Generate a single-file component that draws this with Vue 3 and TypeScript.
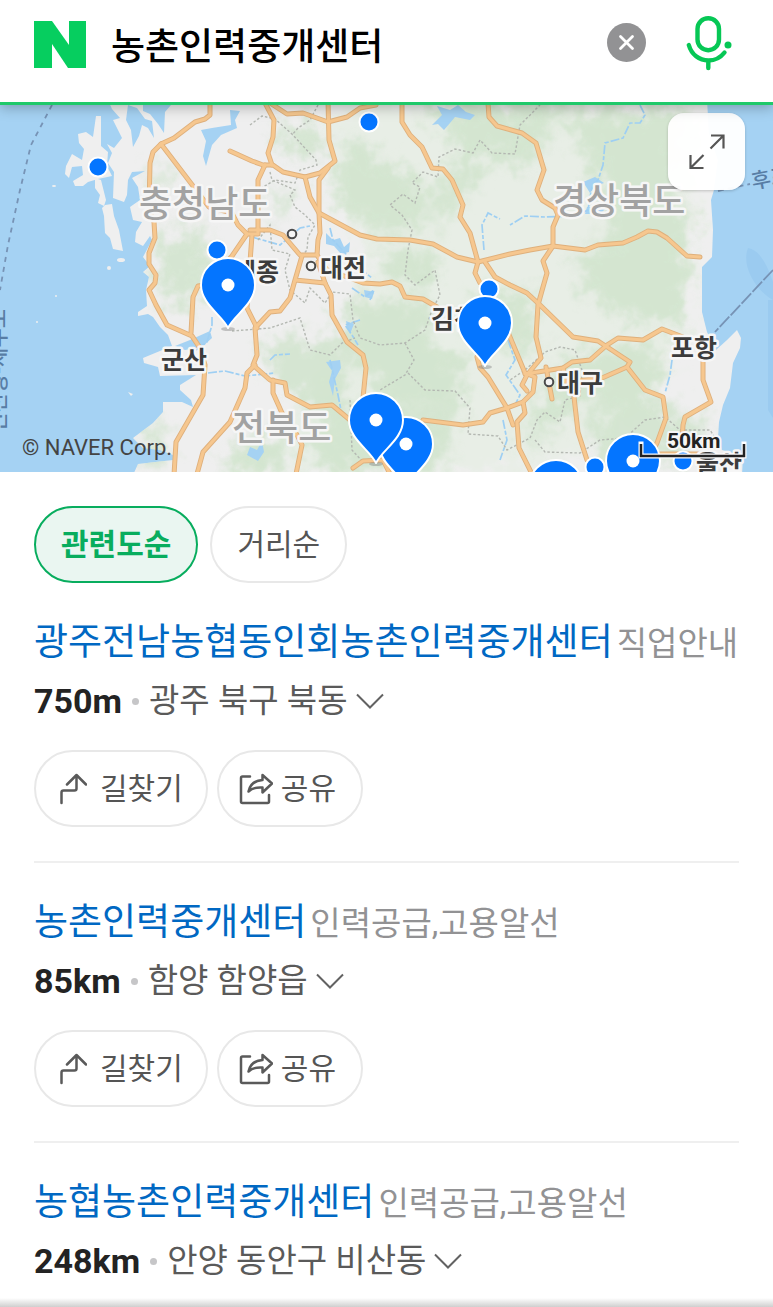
<script setup lang="ts">
import { ref } from 'vue'

interface Place {
  name: string
  category: string
  distance: string
  address: string
  actions: boolean
}

interface Label {
  text: string
  x: number
  y: number
}

interface Point {
  x: number
  y: number
}

const query = ref('농촌인력중개센터')
const sort = ref('관련도순')
const sorts: string[] = ['관련도순', '거리순']

const places: Place[] = [
  { name: '광주전남농협동인회농촌인력중개센터', category: '직업안내', distance: '750m', address: '광주 북구 북동', actions: true },
  { name: '농촌인력중개센터', category: '인력공급,고용알선', distance: '85km', address: '함양 함양읍', actions: true },
  { name: '농협농촌인력중개센터', category: '인력공급,고용알선', distance: '248km', address: '안양 동안구 비산동', actions: false },
]

const provinces: Label[] = [
  { text: '충청남도', x: 139, y: 217 },
  { text: '경상북도', x: 553, y: 214 },
  { text: '전북도', x: 232, y: 441 },
]

const cities: Label[] = [
  { text: '세종', x: 233, y: 281 },
  { text: '대전', x: 320, y: 277 },
  { text: '군산', x: 161, y: 369 },
  { text: '김천', x: 431, y: 328 },
  { text: '포항', x: 671, y: 357 },
  { text: '대구', x: 557, y: 392 },
  { text: '울산', x: 696, y: 473 },
]

const cityDots: Point[] = [
  { x: 292, y: 234 },
  { x: 311, y: 266 },
  { x: 549, y: 382 },
]

const dots: Point[] = [
  { x: 98, y: 167 },
  { x: 369, y: 122 },
  { x: 217, y: 250 },
  { x: 489, y: 289 },
  { x: 595, y: 467 },
  { x: 683, y: 461 },
]

const pins: Point[] = [
  { x: 228, y: 285 },
  { x: 485, y: 323 },
  { x: 406, y: 444 },
  { x: 376, y: 420 },
  { x: 556, y: 487 },
  { x: 633, y: 461 },
]

const roads: string[] = [
  'M210 100V115L205 119L195 122L174 138L161 144L153 152L150 163L149 210L154 222L155 238L149 253V264L156 275L155 283L149 290L156 305L167 325L192 336L200 348L205 365L203 395L176 442L174 475',
  'M161 144L190 182L209 207L232 213L238 225L247 234H258V180L265 165',
  'M230 151L252 161L263 165H273L283 172L305 177L320 173L335 161L329 140L328 100',
  'M247 234L232 256L205 285L198 286L193 297L191 333',
  'M252 235L250 262L247 308L257 328',
  'M265 103L274 120L273 137L268 153L272 165',
  'M270 103L287 114L303 113L328 122L347 117L360 108L376 105',
  'M328 168L319 180V213L320 233L318 240L317 255',
  'M305 177L310 197L319 213L360 235L377 239L410 240L433 244L457 257L478 262L510 254L530 250L553 246L585 250L598 245L623 243L637 237L648 231L657 232L667 238L687 256L700 257',
  'M402 103V122L410 135L422 147L432 168L443 169L452 180L463 205L460 217L470 233L478 262L475 273L480 283',
  'M488 103L489 117L497 126L522 133L536 143L544 170L537 190L542 200L555 208L558 215L553 227V246L543 261L547 273L543 287L538 305L536 337L541 358L527 375',
  'M485 262L495 277L510 285L527 293L540 305L573 337L598 341L630 362L627 367L645 390L663 397L666 418L657 443L640 474',
  'M525 374L563 368L572 362L590 360L607 345L618 338L643 340L662 329L683 337',
  'M627 367L602 378L566 382L563 368M546 367L552 399',
  'M703 360V380L711 402L685 417L683 425L682 442M660 454H700',
  'M505 325L525 373L535 377L533 392L523 402L507 408L490 413L483 422L463 425L423 420',
  'M523 402L525 413L517 422L519 448L532 474',
  'M574 397L578 432L587 460',
  'M477 357L480 368L488 377L507 408L513 425',
  'M325 283L331 295L332 315L347 342L363 355L366 368L363 398',
  'M250 230H270L283 235L300 255H317L327 270L347 277L363 283L380 284L392 282L400 286L405 297L423 299L437 307',
  'M302 256L295 280L325 283L318 262M295 280L290 298L280 311L270 312L255 328L257 355L253 365L270 380L285 383L287 395L310 407L332 405L350 420',
  'M273 380V393L282 413L297 435L302 445L296 474',
  'M255 365L247 373L245 388L230 422L203 452L197 474',
  'M353 468L363 461L383 460L390 474',
  'M527 375L522 385L527 391',
]

const borders: string[] = [
  'M250 125L262 116L275 119L292 134L316 160L317 165L300 170L295 183L275 180L258 190',
  'M318 105L310 120L298 128L292 135M270 172L272 180L295 190L290 195L295 207L305 215L315 225L308 237L307 250L300 258',
  'M258 240L270 225L272 250L290 254L285 270L290 290L305 303L310 288L325 303L332 292L350 294L353 320L360 338L380 345L405 343L425 330L432 310L440 295L435 270L415 285L405 275L408 250L412 230L402 215L390 205L403 194L415 203L420 187L412 183L423 172L438 177L439 157L455 149L473 153L480 140L492 153L515 154L520 125L540 105',
  'M232 331L270 328L300 318L310 350L330 355L342 343L355 338',
  'M405 343L414 360L405 375L380 390M408 373L425 390L455 391L470 408L468 434L498 436L507 450L530 438L537 420L545 412L560 422L565 400L580 396L582 370L575 350L560 347L545 352L525 370L510 380',
  'M535 440L545 452L580 453L600 440L625 438L645 420L665 417L680 430L710 430L720 445',
  'M350 400L352 450L362 461',
]

const rivers: string[] = [
  'M640 105L645 115L640 123L630 123L623 138L605 143L603 165L598 180L592 186L588 210L575 216L545 217L525 216L510 225',
  'M270 360L275 355L290 354M212 317V325L207 342L196 350M208 373L225 371L245 376L275 373',
  'M352 288L365 297L374 290L370 300M360 320L345 325L352 335L358 345',
  'M330 360L338 395L342 415M672 360L670 375L665 393M484 250L482 225L488 213L500 219',
  'M252 237L280 245L300 228L310 226M330 228L333 240L345 253L352 262L372 278',
  'M508 340L515 360L506 375L520 395L515 405M503 420L507 440L500 460',
]

const woods: string[] = [
  'M420 105H565L550 140L520 170L490 155L460 200L440 230L430 210L460 150Z',
  'M385 160L430 185L420 235L380 230L345 215L330 170L355 140Z',
  'M565 115L690 110L685 150L670 200L620 200L590 170Z',
  'M600 180L690 210L685 330L640 320L590 300L575 260L610 240Z',
  'M345 300L430 300L430 345L470 360L460 410L390 405L340 350Z',
  'M260 340L340 340L350 410L340 470L310 470L320 420L270 370Z',
  'M275 125L320 125L325 150L290 160Z',
  'M155 165L170 170L165 190L150 185Z',
  'M165 235L205 230L215 285L180 310L155 285Z',
  'M370 255L440 250L430 295L390 280Z',
  'M570 350L660 345L655 400L630 420L590 400L560 420L530 455L530 410Z',
  'M590 420L650 400L710 425L680 460L600 470Z',
  'M350 410H460L440 472H330Z',
  'M275 190L290 195L285 220L272 215Z',
  'M140 430L165 425L165 465L145 470Z',
  'M230 445L280 430L290 472H225Z',
  'M470 300L530 290L540 350L500 350Z',
]
</script>

<template>
  <div class="page">
    <header class="header">
      <a class="logo" href="#" aria-label="네이버 홈">
        <svg viewBox="0 0 52 47" width="52" height="47" aria-hidden="true">
          <rect width="52" height="47" fill="#06ce5f" />
          <polygon points="18,0 35,0 35,24" fill="#fff" />
          <polygon points="18,23 18,47 34,47" fill="#fff" />
        </svg>
      </a>
      <form class="search" role="search" @submit.prevent>
        <input v-model="query" class="query" type="text" aria-label="검색어" />
        <button class="icon-button" type="button" aria-label="지우기" @click="query = ''">
          <svg viewBox="0 0 39 39" width="39" height="39" aria-hidden="true">
            <circle cx="19.5" cy="19.5" r="19.5" fill="#929294" />
            <path d="M13.5 13.5L25.5 25.5M25.5 13.5L13.5 25.5" stroke="#fff" stroke-width="2.8" stroke-linecap="round" />
          </svg>
        </button>
        <button class="icon-button mic" type="button" aria-label="음성 검색">
          <svg viewBox="0 0 46 56" width="46" height="56" fill="none" stroke="#06c755" stroke-width="4.4" stroke-linecap="round" aria-hidden="true">
            <rect x="11.5" y="3.2" width="21.5" height="32" rx="10.7" />
            <path d="M2.8 30C5.500 39.5 13 45.5 22.5 45.5C29.5 45.5 35 42 38.5 37.5M22.3 46V53" />
            <circle cx="42" cy="30" r="3.5" fill="#06c755" stroke="none" />
          </svg>
        </button>
      </form>
    </header>

    <section class="map" aria-label="지도">
      <svg class="map-canvas" viewBox="0 105 773 367" preserveAspectRatio="xMidYMid slice">
        <defs>
          <filter id="soft" x="-10%" y="-10%" width="120%" height="120%">
            <feGaussianBlur in="SourceGraphic" stdDeviation="7" result="b" />
            <feTurbulence type="fractalNoise" baseFrequency="0.06" numOctaves="3" seed="4" result="n" />
            <feDisplacementMap in="b" in2="n" scale="42" xChannelSelector="R" yChannelSelector="G" />
          </filter>
          <clipPath id="land">
            <path d="M108 100L112 109L120 118L113 120L118 130L122 138L114 148L107 144L112 153L108 163L114 172L113 198L124 202L127 195L128 180L132 172L145 171L132 178L138 187L140 200L130 207L133 220L142 222L136 232L135 242L143 246L150 236L152 240L143 257L150 266L143 272L149 277L146 290L147 306L138 312V316L148 314L153 317L160 327L168 335L172 346L143 358L144 363L158 367L160 376L196 375L180 385V390L191 400L193 407L182 402H163V412L153 423L133 438L143 448L160 450L173 455V460L138 464L133 475H742L743 456L722 450L718 438L719 422L723 405L730 388L733 363L740 348L741 338L737 330L727 340L716 350L707 332L702 312V267L712 257L713 230L711 200L714 190L718 160L709 133L707 100Z" />
          </clipPath>
        </defs>

        <rect x="0" y="100" width="773" height="375" fill="#a5d2f3" />
        <path d="M748 248C760 250 767 265 773 282V300C755 290 741 265 748 248ZM768 300V410L773 418V300Z" fill="#9bcbf0" />

        <g clip-path="url(#land)">
          <rect x="0" y="100" width="773" height="375" fill="#efefef" />
          <path d="M330 105H700L690 330L640 420L540 472H230L340 360L370 260L330 200Z" fill="#e8eee6" filter="url(#soft)" />
          <g fill="#cfe3cb" opacity="0.8" filter="url(#soft)">
            <path v-for="d in woods" :key="d" :d="d" />
          </g>
        </g>

        <g fill="#efefef">
          <path d="M96 116H101V146L108 152L107 166L112 176L98 179L88 182L83 186H75L73 181L83 175L82 166L72 167L69 178L65 174L66 166L72 154L82 160L84 149L79 143L78 134L86 132L93 137Z" />
          <path d="M95 178L101 180L106 200L104 206L98 203L100 195L95 188Z" />
          <path d="M105 205L112 204L114 216L119 230L123 251L113 249L110 238L105 233L104 216L102 208Z" />
          <ellipse cx="54" cy="186" rx="2" ry="1" />
          <ellipse cx="121" cy="260" rx="4" ry="2" />
          <circle cx="109" cy="268" r="2" />
          <circle cx="56" cy="296" r="1" />
          <circle cx="37" cy="322" r="1" />
          <path d="M128 392L133 394L131 396Z" />
        </g>

        <g fill="#a5d2f3">
          <path d="M128 105L137 108L145 119L152 121L154 138L148 128L142 125L139 136L133 147L131 130L126 120Z" />
          <path d="M143 105H171L165 112L164 133L158 124L150 114L143 111Z" />
          <path d="M230 110L240 111L235 120L237 128L221 135L212 145L206 166L203 156L206 141L201 130L212 128L231 125Z" />
          <path d="M175 346L190 340L210 331L212 338L202 347L185 350Z" />
          <path d="M432 125L442 115L437 106L450 110L458 105L466 112L475 115L470 120L455 117L450 123L444 130L438 124Z" />
          <path d="M583 182L595 177L604 183L595 186L590 193L585 185ZM587 207H607L600 214L585 214Z" />
          <path d="M326 233L333 240L340 238L344 247L350 242L349 252L341 254L334 246L326 244Z" />
          <path d="M326 362L340 360L341 368L335 379L333 396L329 382L332 371Z" />
          <path d="M250 447L257 450L262 441L264 452L258 461L247 455Z" />
          <path d="M364 290L374 292L372 299L365 297ZM346 321L354 324L350 334L347 327Z" />
        </g>

        <g fill="none" stroke="#9ecff3" stroke-width="1.7" stroke-dasharray="9 2 4 2">
          <path v-for="d in rivers" :key="d" :d="d" />
        </g>
        <g fill="none" stroke="#b4b8b2" stroke-width="1.4" stroke-dasharray="2.5 2">
          <path v-for="d in borders" :key="d" :d="d" />
        </g>
        <g fill="none" stroke-linecap="round" stroke-linejoin="round">
          <g stroke="#dfb07c" stroke-width="5">
            <path v-for="d in roads" :key="d" :d="d" />
          </g>
          <g stroke="#f6c78f" stroke-width="3.2">
            <path v-for="d in roads" :key="d" :d="d" />
          </g>
        </g>

        <g fill="none" stroke="#7793b5" stroke-width="1.8">
          <path d="M52 105L31 145L20 190L8 245L0 290" stroke-dasharray="5 5" />
          <path d="M773 270L715 332" stroke-dasharray="14 2" />
          <path d="M718 191L750 184" stroke-dasharray="6 4" />
        </g>
        <g class="sea-name">
          <text transform="translate(5 432) rotate(-90)">인천항-제주도</text>
          <text transform="translate(753 189) rotate(-11)">후포</text>
        </g>

        <g class="province">
          <text v-for="l in provinces" :key="l.text" :x="l.x" :y="l.y">{{ l.text }}</text>
        </g>
        <g class="city">
          <text v-for="l in cities" :key="l.text" :x="l.x" :y="l.y">{{ l.text }}</text>
        </g>
        <g fill="#f5f5f5" stroke="#4a4a4a" stroke-width="2">
          <circle v-for="c in cityDots" :key="c.x" :cx="c.x" :cy="c.y" r="4.3" />
        </g>

        <g fill="#0475ff" stroke="#fff" stroke-width="2">
          <circle v-for="d in dots" :key="d.x" :cx="d.x" :cy="d.y" r="9.5" />
        </g>
        <g v-for="p in pins" :key="p.x" :transform="`translate(${p.x} ${p.y})`">
          <ellipse cx="0" cy="44" rx="7" ry="2" fill="#888" opacity="0.45" />
          <path d="M0 43C-6 30 -27 19 -27 0A27 27 0 0 1 27 0C27 19 6 30 0 43Z" fill="#0475ff" stroke="#fff" stroke-width="2" stroke-linejoin="round" />
          <circle r="6.5" fill="#fff" />
        </g>

        <text class="copyright" x="22" y="455">© NAVER Corp.</text>
        <text class="scale" x="667" y="448">50km</text>
        <g fill="none">
          <path d="M641 444V456H744V444" stroke="#fff" stroke-width="5" stroke-linecap="square" />
          <path d="M641 444V456H744V444" stroke="#222" stroke-width="2.5" />
        </g>
      </svg>
      <button class="expand" type="button" aria-label="지도 확대">
        <svg viewBox="0 0 36 36" width="36" height="36" fill="none" stroke="#555" stroke-width="2.2" aria-hidden="true">
          <path d="M22 1.500H34.500V14.500M34.500 1.500L21.500 14.500M1.500 21V34H14.500M1.500 34L14.500 21" />
        </svg>
      </button>
    </section>

    <main class="results">
      <div class="sorts">
        <button
          v-for="s in sorts"
          :key="s"
          class="pill sort"
          :class="{ active: s === sort }"
          type="button"
          :aria-pressed="s === sort"
          @click="sort = s"
        >{{ s }}</button>
      </div>
      <ul class="list">
        <li v-for="place in places" :key="place.name" class="place">
          <h2 class="title">
            <a class="name" href="#">{{ place.name }}</a>
            <span class="category">{{ place.category }}</span>
          </h2>
          <div class="meta">
            <strong class="distance">{{ place.distance }}</strong>
            <span class="bullet"></span>
            <button class="address" type="button">
              {{ place.address }}
              <svg viewBox="0 0 28 16" width="28" height="16" fill="none" stroke="#626262" stroke-width="2" aria-hidden="true">
                <path d="M1 1.5L14 14.5L27 1.5" />
              </svg>
            </button>
          </div>
          <div v-if="place.actions" class="actions">
            <button class="pill route" type="button">
              <svg viewBox="0 0 28 32" width="28" height="32" fill="none" stroke="#5a5a5a" stroke-width="2.5" stroke-linecap="round" stroke-linejoin="round" aria-hidden="true">
                <path d="M2.5 30V19.5Q2.5 17.5 4.5 17.5H15.5Q17.5 17.5 17.5 15.5V2M8 11.5L17.5 2L27 11.5" />
              </svg>
              길찾기
            </button>
            <button class="pill share" type="button">
              <svg viewBox="0 0 34 32" width="34" height="32" fill="none" stroke="#5a5a5a" stroke-width="2.5" stroke-linecap="round" stroke-linejoin="round" aria-hidden="true">
                <path d="M11 3.5H3.5Q2 3.5 2 5V28.5Q2 30 3.5 30H28.5Q30 30 30 28.5V22" />
                <path d="M23.5 2L33 10.5L23.5 19.5V14.5C16.5 14 13 15 9.5 18.5C11 11.5 15.5 7.5 23.5 7Z" />
              </svg>
              공유
            </button>
          </div>
        </li>
      </ul>
    </main>
    <div class="bottom-shade"></div>
  </div>
</template>

<style>
body {
  background: #fff;
}
</style>

<style scoped>
.page {
  display: flex;
  flex-direction: column;
  min-height: 100vh;
  overflow: hidden;
  background: #fff;
  font-family: Roboto, "Noto Sans CJK KR", sans-serif;
}

button,
input {
  margin: 0;
  padding: 0;
  border: 0;
  background: none;
  font: inherit;
}

svg {
  display: block;
  flex: none;
}

.header {
  position: relative;
  z-index: 1;
  display: flex;
  align-items: center;
  box-sizing: border-box;
  height: 105px;
  padding: 0 41px 14px 34px;
  border-bottom: 3px solid #1fc96a;
  background: #fff;
  box-shadow: 0 3px 12px rgba(0, 0, 0, 0.25);
}

.search {
  display: flex;
  flex: 1;
  align-items: center;
  min-width: 0;
}

.query {
  flex: 1;
  min-width: 0;
  height: 56px;
  margin-left: 25px;
  outline: 0;
  color: #000;
  font-size: 37px;
  font-weight: 500;
}

.icon-button {
  flex: none;
  margin-bottom: 3px;
}

.mic {
  margin-left: 40px;
}

.map {
  position: relative;
  height: 367px;
}

.map-canvas {
  width: 100%;
  height: 100%;
}

.map-canvas text {
  paint-order: stroke;
  stroke: #f6f6f6;
  stroke-linejoin: round;
}

.province text {
  fill: #a2a2a2;
  stroke-width: 5px;
  font-size: 36px;
  font-weight: 500;
}

.city text {
  fill: #3c3c3c;
  stroke-width: 5px;
  font-size: 25px;
  font-weight: 700;
}

.map-canvas .sea-name text {
  fill: #587da5;
  stroke: none;
  font-size: 21px;
  font-weight: 500;
}

.map-canvas .copyright {
  fill: #444;
  stroke: none;
  font-size: 22px;
}

.scale {
  fill: #222;
  stroke-width: 4px;
  font-size: 21px;
  font-weight: 700;
}

.expand {
  position: absolute;
  top: 8px;
  right: 28px;
  display: flex;
  align-items: center;
  justify-content: center;
  width: 77px;
  height: 77px;
  border-radius: 16px;
  background: rgba(255, 255, 255, 0.96);
  box-shadow: 0 1px 3px rgba(0, 0, 0, 0.2);
}

.results {
  flex: 1;
  padding: 34px 34px 0;
}

.sorts {
  display: flex;
  gap: 12px;
}

.pill {
  display: flex;
  align-items: center;
  box-sizing: border-box;
  height: 77px;
  border: 2px solid #e8e8e8;
  border-radius: 39px;
  background: #fff;
  color: #555;
  font-size: 30px;
  line-height: 40px;
  white-space: nowrap;
}

.sort {
  padding: 0 25px;
}

.active {
  border-color: #08ad5e;
  background: #eaf6f1;
  color: #08ad5e;
  font-weight: 700;
}

.list {
  margin: 0;
  padding: 0;
  list-style: none;
}

.place {
  padding: 32px 0 34px;
  border-bottom: 2px solid #efefef;
}

.place:last-child {
  padding-bottom: 0;
  border-bottom: 0;
}

.title {
  display: flex;
  align-items: baseline;
  gap: 4px;
  height: 56px;
  margin: 0;
  font-weight: 400;
  line-height: 56px;
  white-space: nowrap;
}

.name {
  color: #0068c3;
  font-size: 37px;
  text-decoration: none;
}

.category {
  color: #929294;
  font-size: 33px;
}

.meta {
  display: flex;
  align-items: center;
  height: 60px;
  gap: 10px;
  line-height: 40px;
  white-space: nowrap;
}

.distance {
  color: #232323;
  font-size: 34px;
  font-weight: 700;
}

.bullet {
  width: 7px;
  height: 7px;
  border-radius: 50%;
  background: #c6c6c8;
}

.address {
  display: flex;
  align-items: center;
  gap: 8px;
  color: #5a5a5a;
  font-size: 33px;
}

.actions {
  display: flex;
  gap: 9px;
  margin-top: 19px;
}

.route {
  gap: 13px;
  padding: 0 23px;
}

.share {
  gap: 8px;
  padding: 0 25px 0 20px;
}

.bottom-shade {
  height: 9px;
  background: linear-gradient(#fff, #cfcfcf);
}
</style>
